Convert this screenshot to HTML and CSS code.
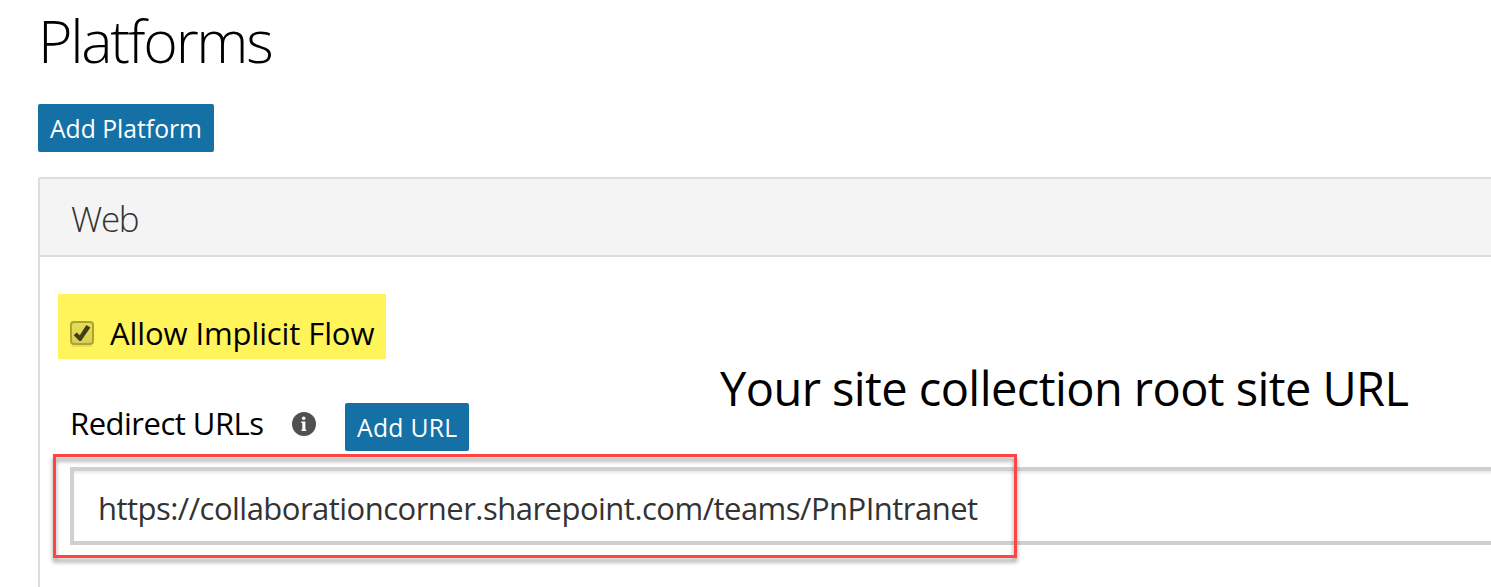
FILE: index.html
```
<!DOCTYPE html>
<html lang="en">
<head>
<meta charset="utf-8">
<title>Platforms</title>
<link rel="stylesheet" href="styles.css">
</head>
<body>
<main class="page">
  <h1 class="title"><span>Platforms</span></h1>
  <button class="btn btn-platform" type="button"><span>Add Platform</span></button>
  <section class="panel">
    <h2 class="panel-header"><span>Web</span></h2>
    <div class="panel-body">
      <div class="implicit">
        <svg class="check" viewBox="0 0 24 26" aria-hidden="true">
          <defs><linearGradient id="box" x1="0" y1="0" x2="0" y2="1"><stop offset="0" stop-color="#e8de55"/><stop offset="1" stop-color="#d8cf50"/></linearGradient></defs>
          <path d="M2 25H22" stroke="#e9df52" stroke-width="2"/>
          <rect x="1" y="1" width="22" height="22" rx="3" fill="url(#box)" stroke="#aaa33c" stroke-width="2"/>
          <path d="M3.8 14.2L6.6 11.4L9.8 14.2L16.3 4L20.4 6.6L11 20H9.4Z" fill="#403d18"/>
        </svg>
        <span class="label">Allow Implicit Flow</span>
      </div>
      <div class="redirect">
        <span class="redirect-label">Redirect URLs</span>
        <svg class="info" viewBox="0 0 24 24" aria-hidden="true">
          <circle cx="12" cy="12" r="12" fill="#505050"/>
          <circle cx="11.7" cy="6.3" r="1.8" fill="#fff"/>
          <path d="M9.3 9.5H13.4V17.6H14.2V19H9.5V17.6H10.3V10.9H9.3Z" fill="#fff"/>
        </svg>
        <button class="btn btn-url" type="button"><span>Add URL</span></button>
      </div>
      <div class="url-field"><span>https://collaborationcorner.sharepoint.com/teams/PnPIntranet</span></div>
    </div>
  </section>
  <div class="callout"></div>
  <div class="note">Your site collection root site URL</div>
</main>
</body>
</html>
```
FILE: styles.css
```
* { box-sizing: border-box; }
body {
  margin: 0;
  background: #fff;
  color: #000;
  font-family: "Open Sans", "Noto Sans", sans-serif;
  overflow: hidden;
}
.page {
  position: relative;
  width: 1491px;
  height: 587px;
  padding-left: 38px;
  overflow: hidden;
}
.title {
  height: 78px;
  margin: 0 0 26px;
  font-size: 59px;
  line-height: 80px;
  font-weight: 300;
  letter-spacing: -2.25px;
}
.btn {
  display: flex;
  align-items: center;
  height: 48px;
  padding: 2px 0 0 12px;
  border: 0;
  border-radius: 2px;
  background: #1570a6;
  color: #fff;
  font-family: inherit;
  font-size: 24.7px;
  line-height: 46px;
  white-space: nowrap;
}
.btn-platform { width: 176px; }
.btn-url { width: 124px; margin-left: 29px; letter-spacing: 0.3px; }
.panel {
  width: 1500px;
  height: 460px;
  margin-top: 25px;
  border: 2px solid #ddd;
  border-radius: 2px;
}
.panel-header {
  height: 78px;
  margin: 0;
  padding: 3px 0 0 31px;
  border-bottom: 2px solid #ddd;
  background: #f4f4f4;
  color: #333;
  font-size: 35px;
  line-height: 74px;
  font-weight: 300;
  letter-spacing: -1.3px;
}
.panel-body { padding: 37px 0 0 18px; }
.implicit {
  display: flex;
  align-items: flex-start;
  width: 328px;
  height: 65px;
  padding-left: 12px;
  background: #fff45a;
  white-space: nowrap;
}
.check { width: 24px; height: 26px; margin: 27px 16px 0 0; }
.label { padding-top: 7px; font-size: 31px; line-height: 65px; letter-spacing: -0.1px; }
.redirect {
  display: flex;
  align-items: center;
  height: 48px;
  margin-top: 44px;
  padding-left: 12px;
  white-space: nowrap;
}
.redirect-label {
  width: 222px;
  padding-bottom: 8px;
  font-size: 31px;
  line-height: 40px;
  letter-spacing: -0.5px;
}
.info { width: 24px; height: 24px; margin-bottom: 6px; }
.url-field {
  width: 1500px;
  height: 78px;
  margin: 16px 0 0 12px;
  padding: 2px 0 0 24px;
  border: 4px solid #d0d0d0;
  box-shadow: inset 0 3px 3px -1px #e8e8e8;
  color: #333;
  font-size: 31px;
  line-height: 70px;
  letter-spacing: -0.52px;
  white-space: nowrap;
}
.callout {
  position: absolute;
  left: 53px;
  top: 454px;
  width: 964px;
  height: 104px;
  border: 3px solid #ff4444;
  filter: drop-shadow(0 4px 2px rgba(0, 0, 0, 0.4));
}
.note {
  position: absolute;
  left: 720px;
  top: 349px;
  font-size: 47px;
  line-height: 78px;
  letter-spacing: -0.57px;
  white-space: nowrap;
}
```
